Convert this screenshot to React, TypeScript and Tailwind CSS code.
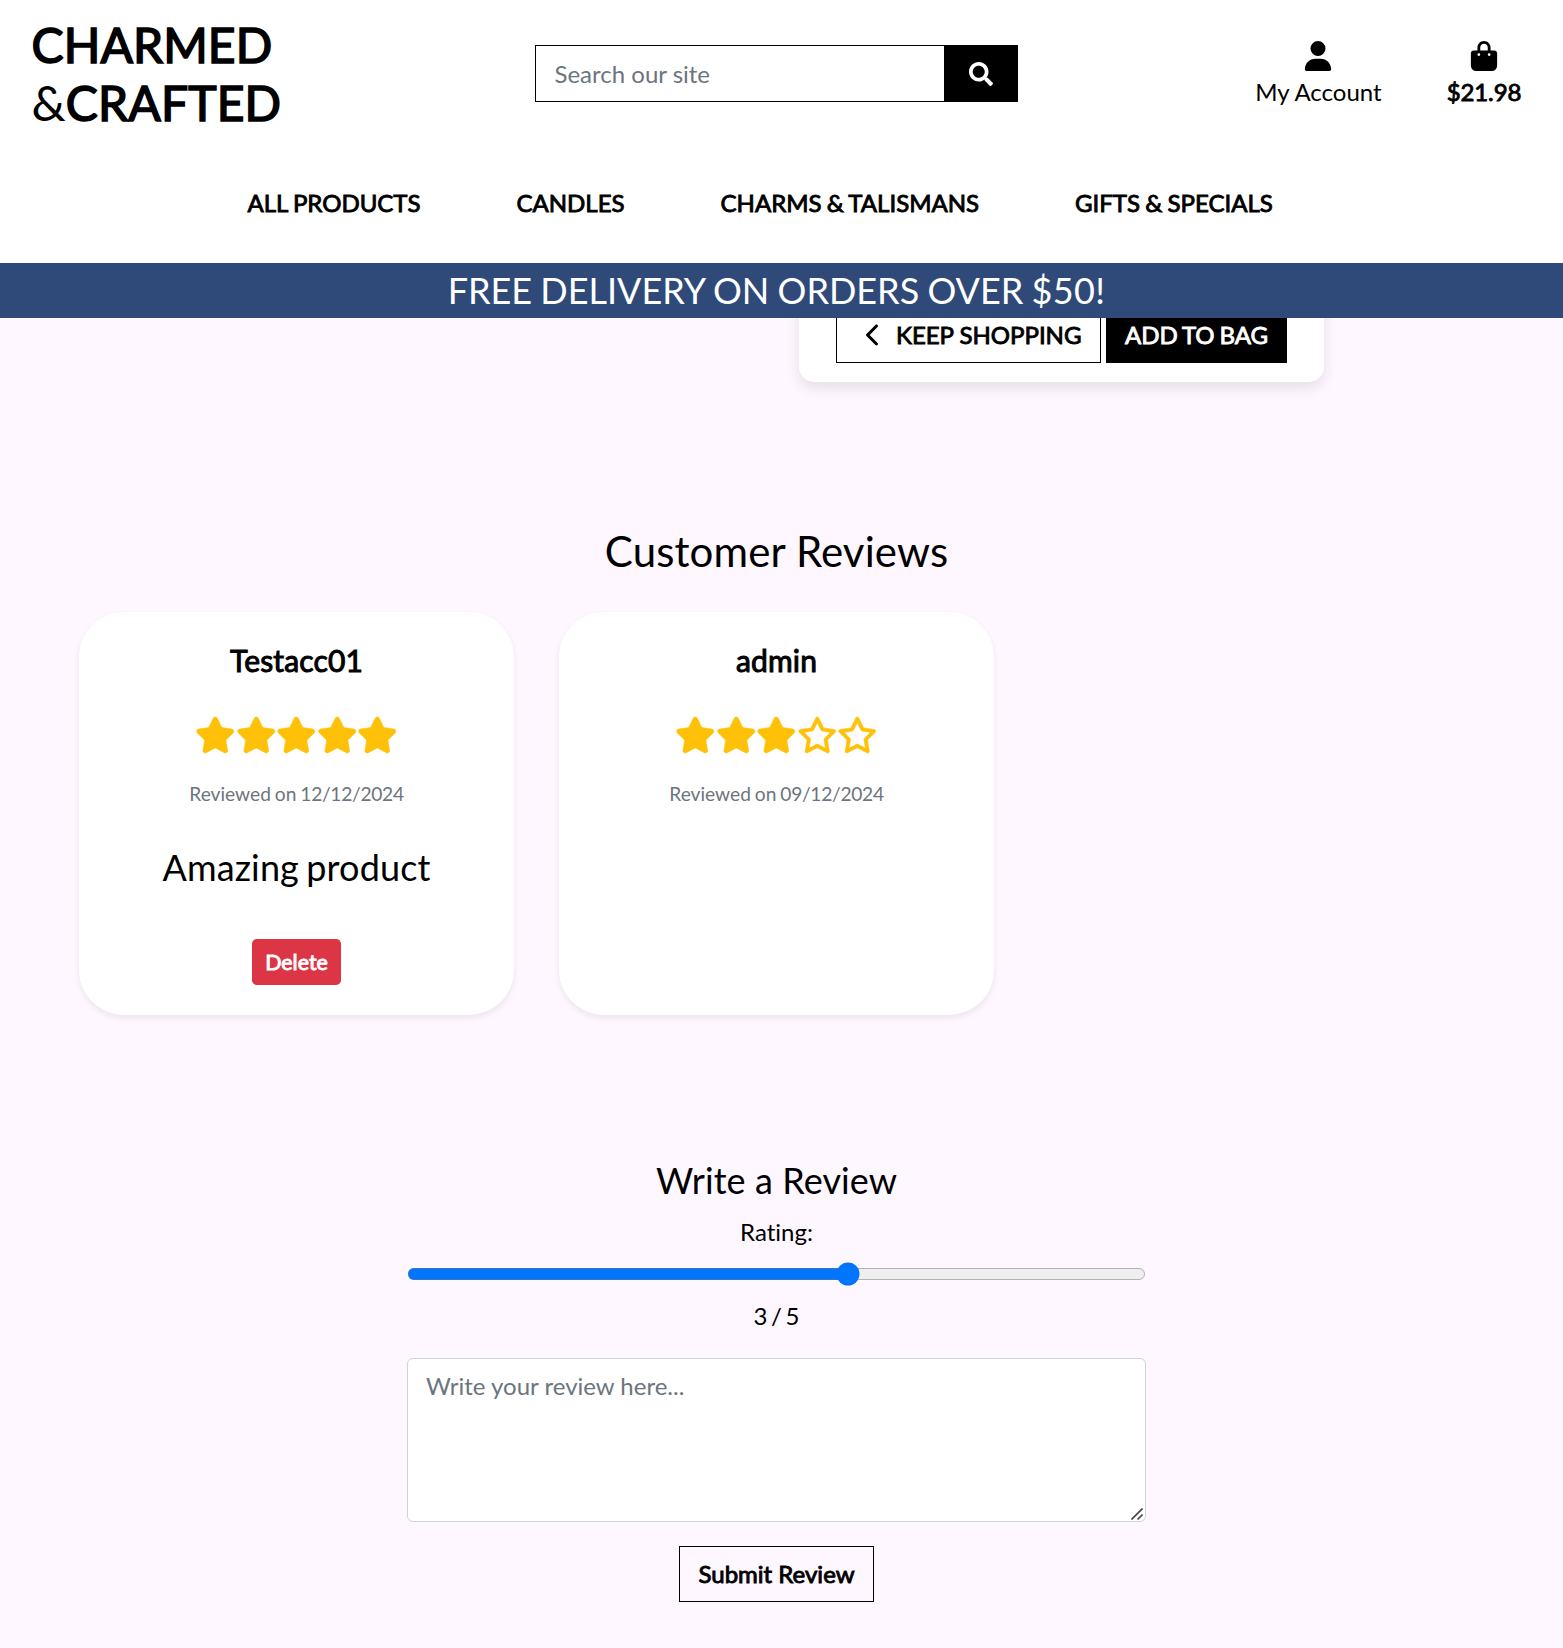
import type { ReactNode } from "react";
import { FaSearch } from "react-icons/fa";
import { FaBagShopping, FaChevronLeft, FaRegStar, FaStar, FaUser } from "react-icons/fa6";

const navLinks = ["ALL PRODUCTS", "CANDLES", "CHARMS & TALISMANS", "GIFTS & SPECIALS"];

type Review = { name: string; rating: number; date: string; text?: string; own?: boolean };

const reviews: Review[] = [
  { name: "Testacc01", rating: 5, date: "12/12/2024", text: "Amazing product", own: true },
  { name: "admin", rating: 3, date: "09/12/2024" },
];

function Heavy({ children }: { children: ReactNode }) {
  return <span className="[-webkit-text-stroke:0.9px_currentColor]">{children}</span>;
}

function Header() {
  return (
    <header className="h-[263px] bg-white">
      <div className="flex h-[147px]">
        <a className="mt-4 ml-[31.5px] w-[503.5px] text-[48px] leading-[57.6px]">
          <span className="block tracking-[0.1px] [-webkit-text-stroke:1.6px_currentColor]">CHARMED</span>
          <span className="block tracking-[0.15px]">
            &amp;<span className="[-webkit-text-stroke:1.6px_currentColor]">CRAFTED</span>
          </span>
        </a>
        <form className="mt-[45px] flex h-[57px] w-[483px] border border-black">
          <input
            className="min-w-0 flex-1 pl-[18.5px] text-2xl outline-none placeholder:text-[#6c757d]"
            placeholder="Search our site"
          />
          <button type="button" className="flex w-[73px] items-center justify-center bg-black text-white">
            <FaSearch size={24} />
          </button>
        </form>
        <div className="mt-[41px] ml-auto flex text-2xl leading-9">
          <a className="mr-[65px] flex flex-col items-center">
            <FaUser size={30} />
            <span className="mt-[3px]">My Account</span>
          </a>
          <a className="mr-[41.7px] flex flex-col items-center">
            <FaBagShopping size={30} />
            <span className="mt-[3px] tracking-[-0.1px]">
              <Heavy>$21.98</Heavy>
            </span>
          </a>
        </div>
      </div>
      <nav className="mt-[38px] ml-[247.5px] flex gap-24 text-2xl leading-9 [word-spacing:-0.9px]">
        {navLinks.map((label) => (
          <a key={label} className="whitespace-nowrap">
            <Heavy>{label}</Heavy>
          </a>
        ))}
      </nav>
    </header>
  );
}

function ReviewCard({ review }: { review: Review }) {
  return (
    <article className="flex h-[403px] w-[435px] flex-col items-center rounded-[45px] bg-white pt-[30px] shadow-[0_3px_6px_rgba(0,0,0,0.08)]">
      <h3 className="text-[30px] leading-9 tracking-[0.15px] [-webkit-text-stroke:1px_currentColor]">{review.name}</h3>
      <div className="mt-[39px] flex text-[#ffc107]">
        {[1, 2, 3, 4, 5].map((n) =>
          n <= review.rating ? (
            <FaStar key={n} className="h-9 w-[40.5px] overflow-visible stroke-current stroke-[8px]" />
          ) : (
            <FaRegStar key={n} className="h-9 w-[40.5px] overflow-visible stroke-current stroke-[8px]" />
          ),
        )}
      </div>
      <p className="mt-[26.5px] text-[19.2px] leading-[28.8px] text-[#6c757d] [word-spacing:-1px]">
        Reviewed on <span className="tracking-[-0.3px]">{review.date}</span>
      </p>
      {review.text && (
        <p className="mt-[31px] text-[36px] leading-[54px] tracking-[0.13px] [word-spacing:-2px]">{review.text}</p>
      )}
      {review.own && (
        <button className="mt-[45px] h-[46px] w-[89px] rounded-[4.8px] bg-[#dc3545] text-[21.4px] leading-[46px] text-white">
          <Heavy>Delete</Heavy>
        </button>
      )}
    </article>
  );
}

export default function App() {
  return (
    <div className="h-[1648px] w-full overflow-hidden bg-[#fef7ff] font-['Lato',sans-serif] text-black [font-variant-ligatures:none]">
      <Header />
      <div className="h-[55px] bg-[#2f4a79] pr-[10px] text-center text-[36px] leading-[55px] text-white [word-spacing:-1px]">
        FREE DELIVERY ON ORDERS OVER <span className="tracking-[0.4px]">$50!</span>
      </div>
      <div className="h-[208px] overflow-hidden">
        <div className="-mt-10 ml-[799px] flex h-[104px] w-[525px] items-end gap-[5px] rounded-[15px] bg-white pb-[19px] pl-[37px] text-2xl shadow-[0_6px_14px_rgba(0,0,0,0.1)]">
          <button className="flex h-[57px] w-[265px] items-center border border-black pl-[29px]">
            <FaChevronLeft className="h-6 w-[15px]" />
            <span className="ml-[15px] whitespace-nowrap">
              <Heavy>KEEP SHOPPING</Heavy>
            </span>
          </button>
          <button className="h-[57px] w-[181px] bg-black text-white [word-spacing:-1.2px]">
            <Heavy>ADD TO BAG</Heavy>
          </button>
        </div>
      </div>
      <main className="w-[1553px]">
        <h2 className="text-center text-[42px] leading-[50.4px] tracking-[0.13px]">Customer Reviews</h2>
        <section className="mt-[36px] ml-[79px] flex gap-[45px]">
          {reviews.map((review) => (
            <ReviewCard key={review.name} review={review} />
          ))}
        </section>
        <section className="mx-auto mt-[144px] flex w-[739px] flex-col items-center text-2xl leading-9">
          <h3 className="text-[36px] leading-[43.2px] tracking-[0.08px]">Write a Review</h3>
          <label className="mt-[11px]">Rating:</label>
          <input
            type="range"
            min={0}
            max={5}
            defaultValue={3}
            className="m-0 mt-[8px] w-[492.6px] [zoom:1.5]"
          />
          <p className="mt-[12px] [word-spacing:-2.5px]">3 / 5</p>
          <div className="relative mt-[24px] h-[164px] w-full">
            <textarea
              placeholder="Write your review here..."
              className="block h-full w-full resize-none rounded-[6px] border border-[#ced4da] bg-white px-[18px] py-[9px] leading-9 placeholder:text-[#6c757d]"
            />
            <svg className="absolute right-[3px] bottom-[2px]" width="12" height="12" fill="none" stroke="#444" strokeWidth="1.6">
              <path d="M0.5 11.5 11.5 0.5M6.5 11.5 11.5 6.5" />
            </svg>
          </div>
          <button className="mt-6 h-[56px] w-[195px] border border-black">
            <Heavy>Submit Review</Heavy>
          </button>
        </section>
      </main>
    </div>
  );
}
